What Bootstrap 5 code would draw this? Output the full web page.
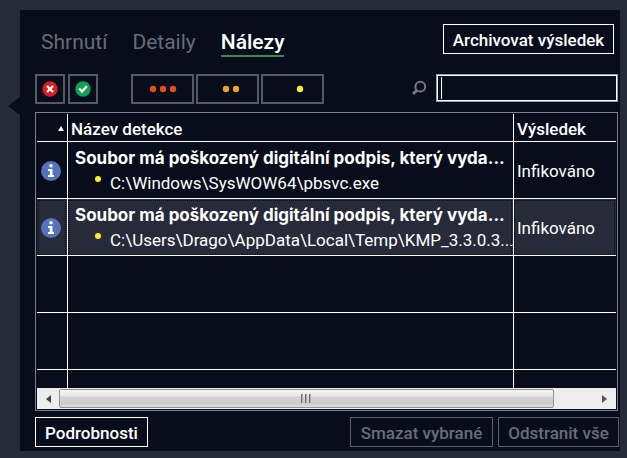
<!DOCTYPE html>
<html lang="cs">
<head>
<meta charset="utf-8">
<meta name="viewport" content="width=device-width, initial-scale=1">
<title>Nálezy</title>
<link href="https://cdn.jsdelivr.net/npm/bootstrap@5.3.0/dist/css/bootstrap.min.css" rel="stylesheet">
<style>
body{background:#272a38;color:#fff;font-family:Roboto,"Open Sans",sans-serif;font-size:17px;line-height:20px;padding:10px 7px 7px 20px}
.panel{background:#080d1c;padding:14px 1px 4px 15px}
.panel::before{content:"";position:absolute;left:-12px;top:87px;border:solid transparent;border-width:9px 12px 9px 0;border-right-color:#080d1c}
.top{height:30px}
.tabs{gap:25px;padding:6px 0 0 6px}
.tabs a{color:#686c77;font-size:21px;line-height:24px;text-decoration:none;border-bottom:2px solid transparent;height:27px}
.tabs a.active{color:#fff;font-weight:500;border-color:#3f8752}
.act{--bs-btn-color:#fff;--bs-btn-border-color:#fff;--bs-btn-hover-color:#fff;--bs-btn-hover-border-color:#fff;--bs-btn-disabled-color:#696d78;--bs-btn-disabled-border-color:#5c606b;--bs-btn-disabled-opacity:1;--bs-btn-border-radius:0;--bs-btn-padding-x:0;--bs-btn-padding-y:5px;--bs-btn-font-size:17px;--bs-btn-font-weight:500;--bs-btn-line-height:20px;height:30px;white-space:nowrap}
.archive{width:171px;margin-right:5px}
.details{width:113px}.remove{width:143px}.clear{width:121px;margin-left:5px}
.tools{margin-top:20px}
.states{gap:3px}
.levels{gap:2px;margin-left:33px}
.filter{--bs-btn-border-radius:0;--bs-btn-border-width:2px;--bs-btn-border-color:#555964;--bs-btn-hover-border-color:#999;--bs-btn-padding-x:0;--bs-btn-padding-y:0;width:30px;height:30px}
.level{width:63px}
.search{width:182px;height:28px;padding:2px 5px;border:2px solid #fff;outline:1px solid #8fa5ad;outline-offset:-1px;border-radius:0;color:#fff;background:linear-gradient(#fff,#fff) 3px 1px/1px 22px no-repeat #080d1c}
.search:focus{color:#fff;background-color:#080d1c;border-color:#fff;box-shadow:none}
.finder{margin-right:1px}
.lens{margin-right:9px}
.results{border:1px solid #7e828c;padding:1px;margin:8px 1px 6px 0}
.viewport{overflow:hidden;height:274px}
.grid{width:100%;table-layout:fixed;border-collapse:separate;border-spacing:0;line-height:20px}
.grid th,.grid td{border:0 solid #fff;border-bottom-width:1px;padding:0 3px;overflow:hidden;white-space:nowrap}
.grid th+th,.grid td+td{border-left-width:1px}
.grid th{height:28px;font-weight:500;padding-top:3px}
.grid td{height:57px;padding-top:2px}
.grid .mark-col{width:30px;text-align:right}
.grid .result-col{width:103px}
.grid .finding{padding:2px 0 0 7px}
.grid .picked td{background:#272a38;outline:1px dotted #080a12;outline-offset:-2px}
.title{font-family:Inter,Roboto,sans-serif;font-size:17px;font-weight:700;line-height:24px}
.path{padding-left:20px;gap:9px;line-height:26px}
.path svg{margin-bottom:8px}
.scroll{height:21px;background:#ededed}
.scroll button{width:22px;height:21px;background:none;border:0;padding:0;display:flex;align-items:center;justify-content:center}
.scroll .thumb{width:495px;height:19px;border:1px solid #8d9095;border-radius:2px;background:linear-gradient(#f5f5f5,#e8e8e8 36%,#d3d4d5 40%,#ccc 80%,#e0e0e0)}
</style>
<script src="https://cdn.jsdelivr.net/npm/bootstrap@5.3.0/dist/js/bootstrap.bundle.min.js"></script>
</head>
<body>
<main class="panel position-relative">
  <header class="top d-flex justify-content-between align-items-start">
    <nav class="tabs d-flex" aria-label="Výsledky"><a href="#">Shrnutí</a><a href="#">Detaily</a><a href="#" class="active" aria-current="page">Nálezy</a></nav>
    <button type="button" class="btn act archive">Archivovat výsledek</button>
  </header>
  <div class="tools d-flex align-items-start">
    <div class="states d-flex">
      <button type="button" class="btn filter d-flex align-items-center justify-content-center" aria-label="Infikované"><svg width="16" height="16" viewBox="0 0 16 16"><circle cx="8" cy="8" r="7.7" fill="#d71e25"/><path d="M5 5l6 6M11 5l-6 6" stroke="#fff" stroke-width="2.2"/></svg></button>
      <button type="button" class="btn filter d-flex align-items-center justify-content-center" aria-label="Vyřešené"><svg width="16" height="16" viewBox="0 0 16 16"><circle cx="8" cy="8" r="7.7" fill="#149d54"/><path d="M4.3 7.5l2.8 3 4.7-5.2" fill="none" stroke="#fff" stroke-width="2.2"/></svg></button>
    </div>
    <div class="levels d-flex">
      <button type="button" class="btn filter level d-flex align-items-center justify-content-center" aria-label="Vysoká závažnost"><svg width="28" height="8" fill="#e34c1d"><circle cx="4" cy="4" r="3.2"/><circle cx="14" cy="4" r="3.2"/><circle cx="24" cy="4" r="3.2"/></svg></button>
      <button type="button" class="btn filter level d-flex align-items-center justify-content-center" aria-label="Střední závažnost"><svg width="30" height="8" fill="#eda02b"><circle cx="13" cy="4" r="3.2"/><circle cx="23" cy="4" r="3.2"/></svg></button>
      <button type="button" class="btn filter level d-flex align-items-center justify-content-center" aria-label="Nízká závažnost"><svg width="30" height="8" fill="#ffee28"><circle cx="22" cy="4" r="3.2"/></svg></button>
    </div>
    <div class="finder d-flex align-items-center ms-auto">
      <label for="search"><svg class="lens d-block" width="16" height="16" viewBox="0 0 16 16" fill="none" stroke="#747986" aria-hidden="true"><circle cx="9.3" cy="6.7" r="4.9" stroke-width="2"/><path d="M5.8 10.2L2 14" stroke-width="3"/></svg></label>
      <input type="text" id="search" class="form-control search" aria-label="Hledat">
    </div>
  </div>
  <section class="results">
    <div class="viewport">
      <table class="grid">
        <thead><tr><th class="mark-col" aria-label="Stav"><svg width="6" height="6" class="d-block ms-auto"><path d="M0 5L3 0l3 5z" fill="#fff"/></svg></th><th>Název detekce</th><th class="result-col">Výsledek</th></tr></thead>
        <tbody>
          <tr><td><svg class="d-block" width="22" height="22" viewBox="0 0 22 22"><circle cx="11" cy="11" r="10" fill="#5672b8"/><circle cx="11" cy="5.8" r="1.8" fill="#fff"/><path d="M8 9h4.5v6H14v2H8v-2h1.8v-4H8z" fill="#fff"/></svg></td>
          <td class="finding"><div class="title">Soubor má poškozený digitální podpis, který vyda...</div><div class="path d-flex align-items-center"><svg class="flex-shrink-0" width="6" height="6"><circle cx="3" cy="3" r="3" fill="#ffee28"/></svg><span>C:\Windows\SysWOW64\pbsvc.exe</span></div></td><td>Infikováno</td></tr>
          <tr class="picked"><td><svg class="d-block" width="22" height="22" viewBox="0 0 22 22"><circle cx="11" cy="11" r="10" fill="#5672b8"/><circle cx="11" cy="5.8" r="1.8" fill="#fff"/><path d="M8 9h4.5v6H14v2H8v-2h1.8v-4H8z" fill="#fff"/></svg></td>
          <td class="finding"><div class="title">Soubor má poškozený digitální podpis, který vyda...</div><div class="path d-flex align-items-center"><svg class="flex-shrink-0" width="6" height="6"><circle cx="3" cy="3" r="3" fill="#ffee28"/></svg><span>C:\Users\Drago\AppData\Local\Temp\KMP_3.3.0.3...</span></div></td><td>Infikováno</td></tr>
          <tr><td></td><td></td><td></td></tr><tr><td></td><td></td><td></td></tr><tr><td></td><td></td><td></td></tr>
        </tbody>
      </table>
    </div>
    <div class="scroll d-flex align-items-center">
      <button type="button" aria-label="Posunout vlevo"><svg width="6" height="10"><path d="M6 1v8L1 5z" fill="#444"/></svg></button>
      <div class="thumb d-flex align-items-center justify-content-center"><svg width="11" height="9"><path d="M.5 0v9M4.5 0v9M8.5 0v9" stroke="#6c6e72"/><path d="M1.5 0v9M5.5 0v9M9.5 0v9" stroke="#a9abae"/></svg></div>
      <button type="button" class="ms-auto" aria-label="Posunout vpravo"><svg width="6" height="10"><path d="M0 1v8L5 5z" fill="#555"/></svg></button>
    </div>
  </section>
  <footer class="d-flex">
    <button type="button" class="btn act details">Podrobnosti</button>
    <button type="button" class="btn act remove ms-auto" disabled>Smazat vybrané</button>
    <button type="button" class="btn act clear" disabled>Odstranit vše</button>
  </footer>
</main>
</body>
</html>
